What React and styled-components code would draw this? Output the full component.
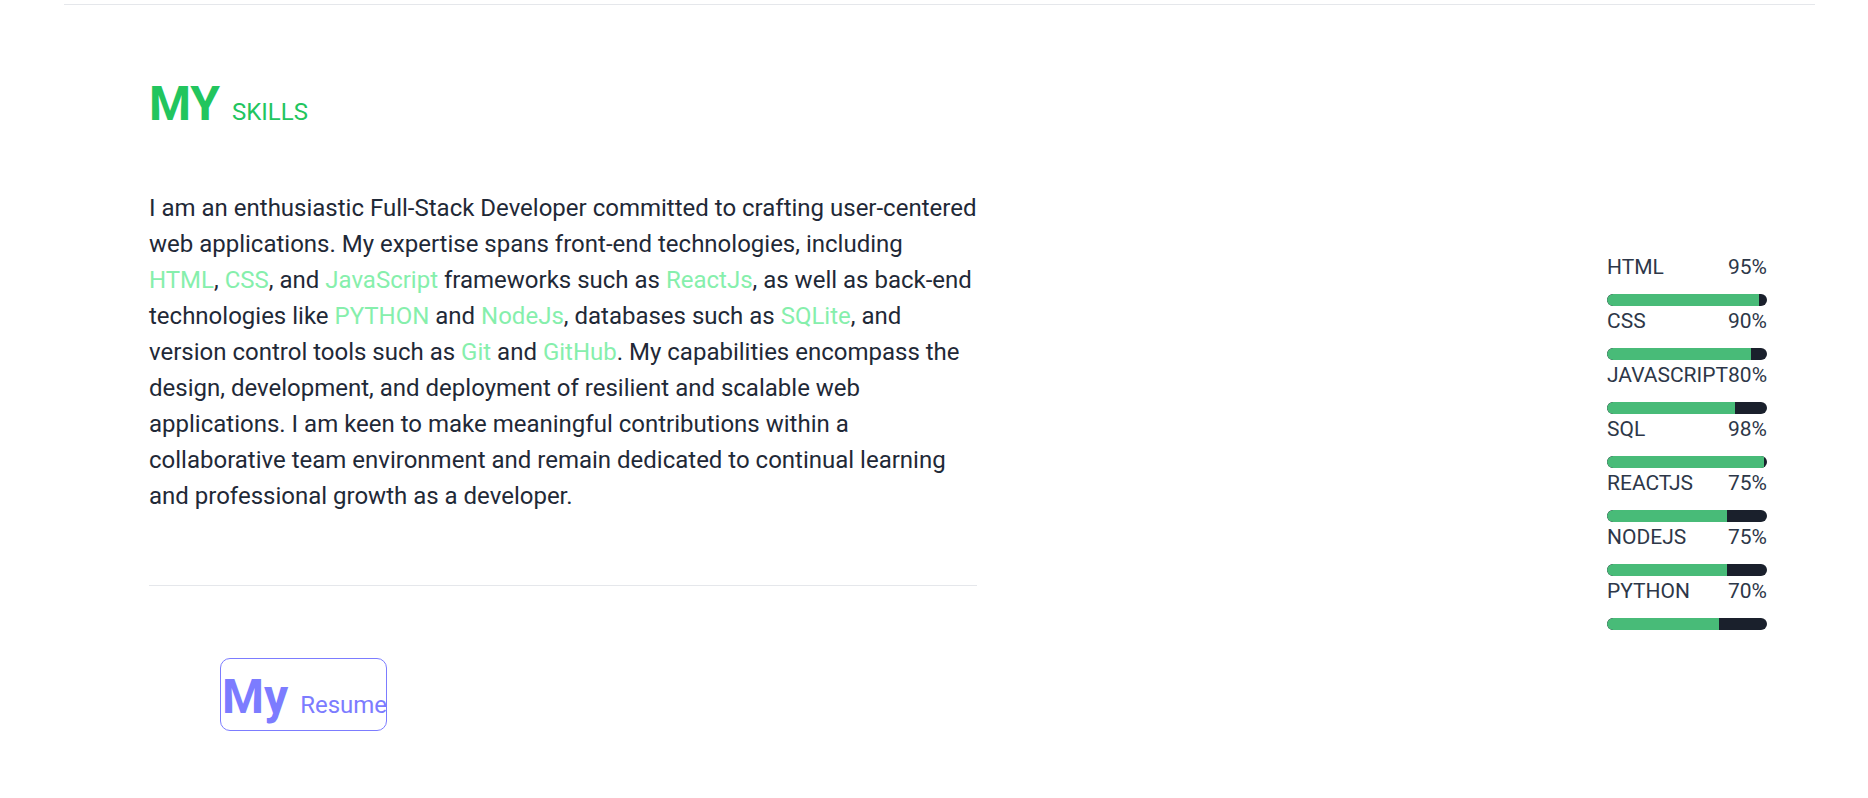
import React from "react";
import styled, { createGlobalStyle } from "styled-components";

const GlobalStyle = createGlobalStyle`
    body {
        margin: 0;
        background: #ffffff;
        font-family: Roboto, "Liberation Sans", sans-serif;
        color: #1f2937;
    }
`;

const TopRule = styled.div`
    margin: 4px 53px 0 64px;
    height: 1px;
    background: #e5e7eb;
`;

const Section = styled.section`
    display: flex;
    justify-content: space-between;
    align-items: flex-start;
    padding: 0 101px 0 149px;
`;

const LeftColumn = styled.div`
    width: 828px;
    padding-top: 75px;
`;

const Title = styled.h2`
    margin: 0;
    font-size: 48px;
    line-height: 48px;
    font-weight: 700;
    color: #22c55e;

    .small {
        font-size: 24px;
        font-weight: 400;
    }
`;

const About = styled.p`
    margin: 54px 0 0;
    font-size: 24px;
    line-height: 36px;
    color: #1f2937;
`;

const Tech = styled.span`
    color: #86efac;
`;

const Divider = styled.div`
    margin-top: 71px;
    height: 1px;
    background: #e5e7eb;
`;

const ResumeButton = styled.div`
    box-sizing: border-box;
    width: 167px;
    height: 73px;
    margin: 72px 0 0 71px;
    padding: 10px 0 0 1px;
    border: 1px solid #7c7cff;
    border-radius: 10px;
    color: #7c7cff;
    font-size: 48px;
    line-height: 56px;
    font-weight: 700;
    white-space: nowrap;

    .small {
        font-size: 24px;
        font-weight: 400;
    }
`;

const SkillList = styled.div`
    width: 160px;
    margin-top: 247px;
`;

const SkillHead = styled.div`
    display: flex;
    justify-content: space-between;
    font-size: 21px;
    line-height: 30px;
    color: #2d3748;
    white-space: nowrap;
`;

const Track = styled.div`
    margin-top: 12px;
    height: 12px;
    border-radius: 6px;
    background: #1a202c;
    overflow: hidden;
`;

const Fill = styled.div`
    height: 100%;
    background: #48bb78;
    border-radius: 6px 0 0 6px;
`;

const skills = [
    { name: "HTML", level: 95 },
    { name: "CSS", level: 90 },
    { name: "JAVASCRIPT", level: 80 },
    { name: "SQL", level: 98 },
    { name: "REACTJS", level: 75 },
    { name: "NODEJS", level: 75 },
    { name: "PYTHON", level: 70 }
];

const App = () => {
    return (
        <>
            <GlobalStyle />
            <TopRule />
            <Section>
                <LeftColumn>
                    <Title>
                        MY <span className="small">SKILLS</span>
                    </Title>
                    <About>
                        I am an enthusiastic Full-Stack Developer committed to
                        crafting user-centered web applications. My expertise
                        spans front-end technologies, including{" "}
                        <Tech>HTML</Tech>, <Tech>CSS</Tech>, and{" "}
                        <Tech>JavaScript</Tech> frameworks such as{" "}
                        <Tech>ReactJs</Tech>, as well as back-end technologies
                        like <Tech>PYTHON</Tech> and <Tech>NodeJs</Tech>,
                        databases such as <Tech>SQLite</Tech>, and version
                        control tools such as <Tech>Git</Tech> and{" "}
                        <Tech>GitHub</Tech>. My capabilities encompass the
                        design, development, and deployment of resilient and
                        scalable web applications. I am keen to make meaningful
                        contributions within a collaborative team environment
                        and remain dedicated to continual learning and
                        professional growth as a developer.
                    </About>
                    <Divider />
                    <ResumeButton>
                        My <span className="small">Resume</span>
                    </ResumeButton>
                </LeftColumn>
                <SkillList>
                    {skills.map(({ name, level }) => (
                        <div key={name}>
                            <SkillHead>
                                <span>{name}</span>
                                <span>{level}%</span>
                            </SkillHead>
                            <Track>
                                <Fill style={{ width: `${level}%` }} />
                            </Track>
                        </div>
                    ))}
                </SkillList>
            </Section>
        </>
    );
};

export default App;
